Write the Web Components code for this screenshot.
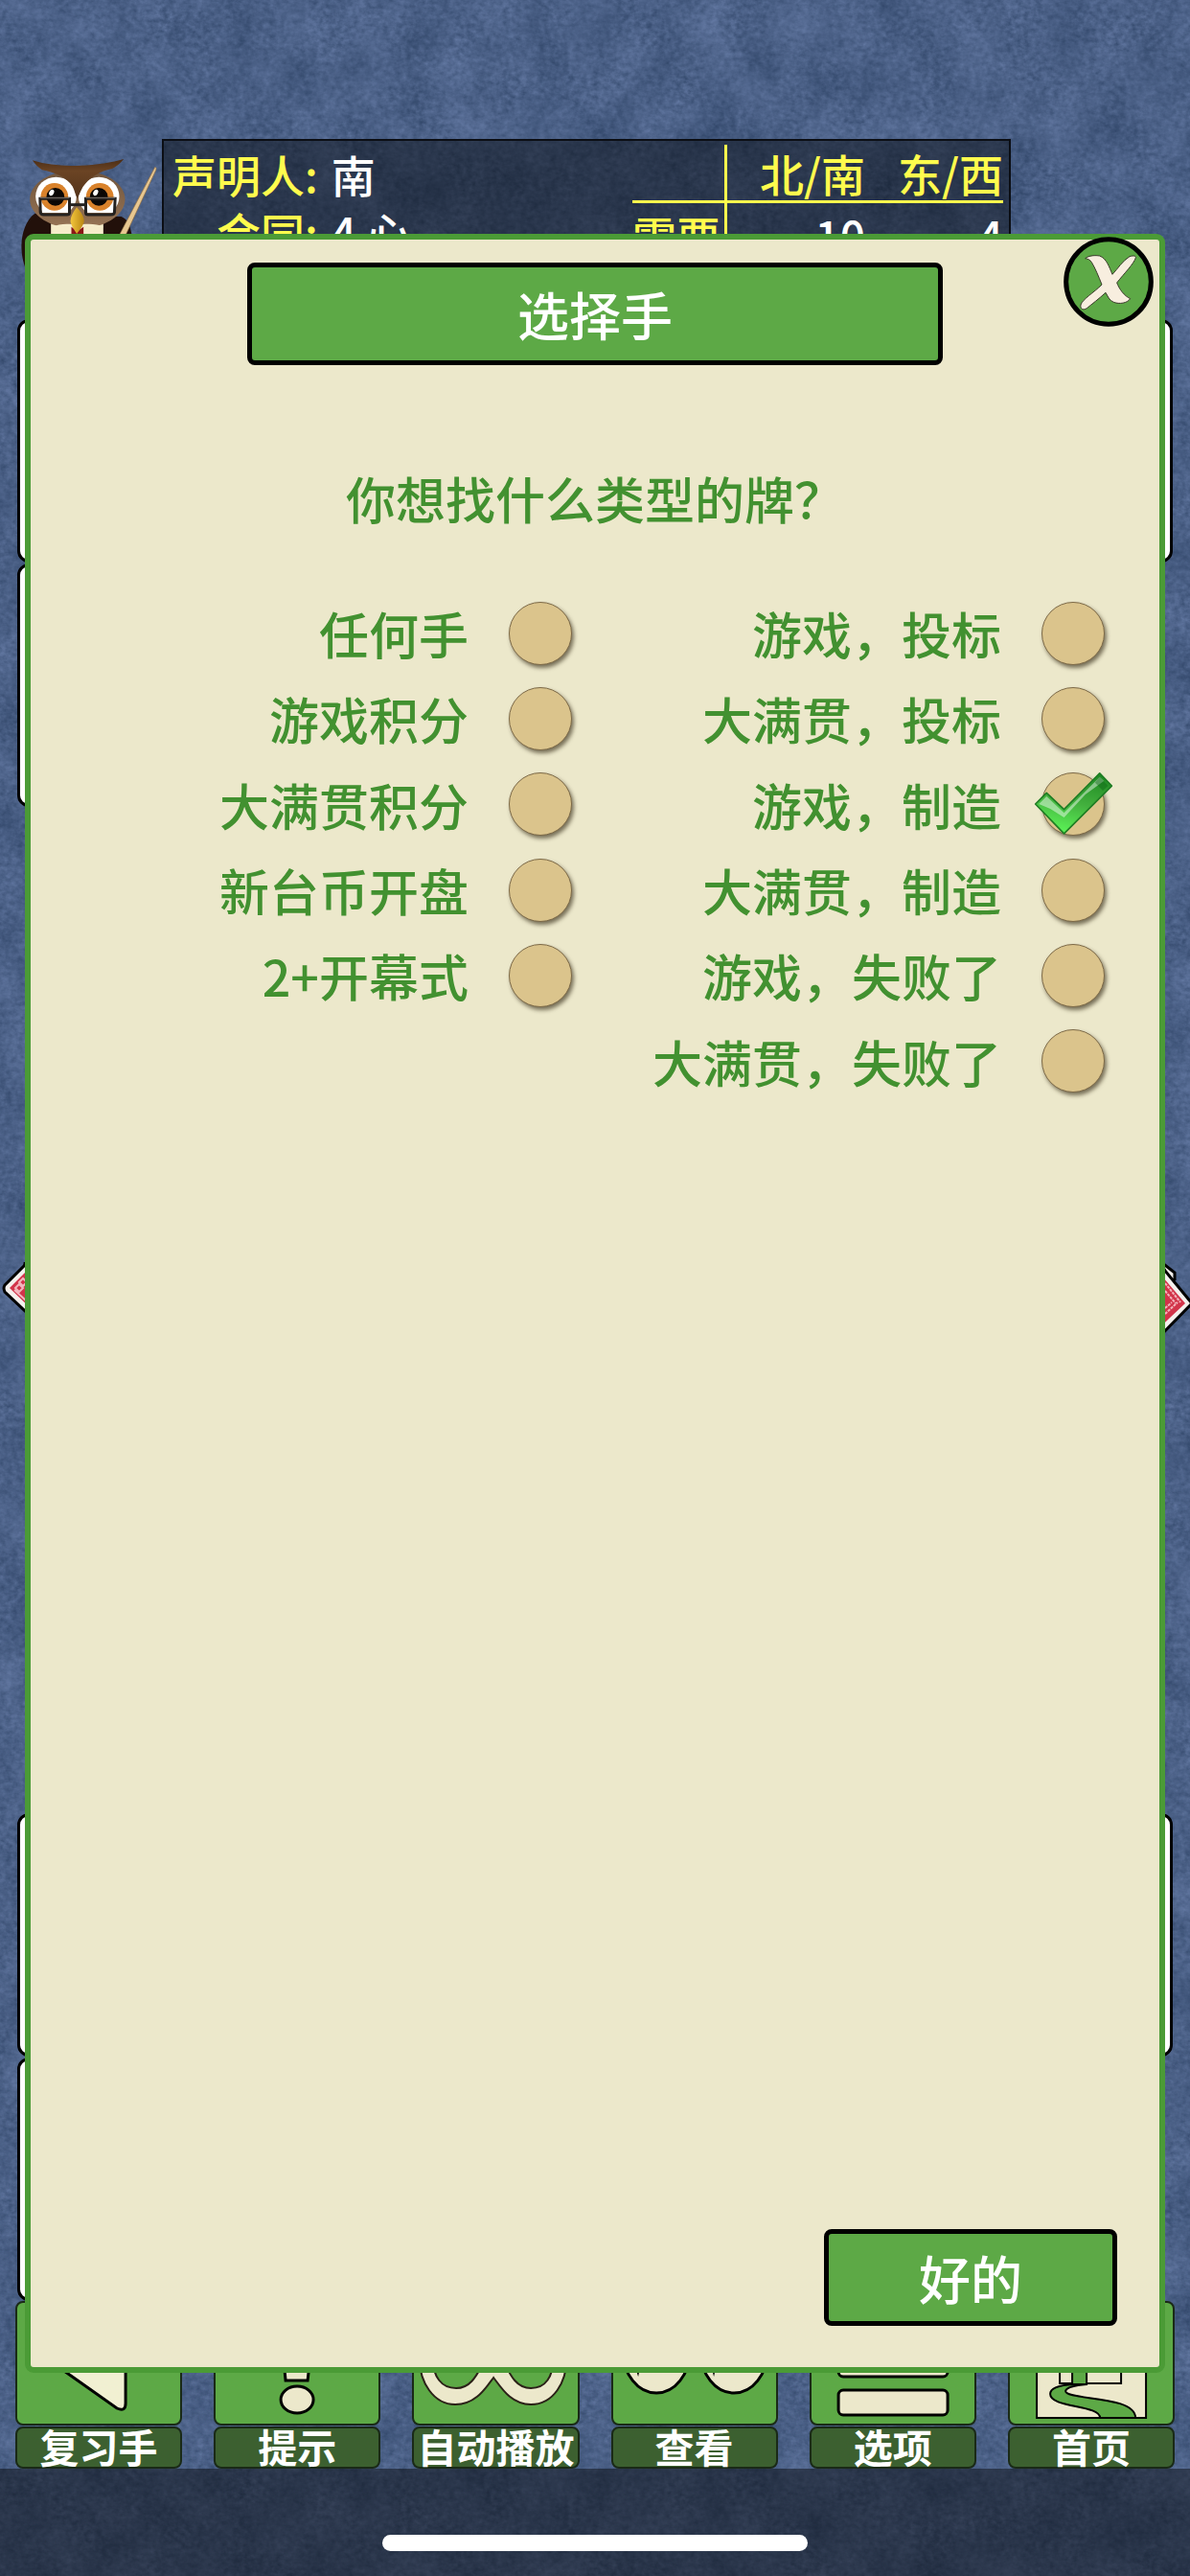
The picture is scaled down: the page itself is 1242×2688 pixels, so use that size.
<!DOCTYPE html>
<html lang="zh-CN">
<head>
<meta charset="utf-8">
<meta name="viewport" content="width=device-width, initial-scale=1">
<title>选择手</title>
<style>
    body {
        margin: 0;
        font-family: "Noto Sans CJK SC", "Noto Sans", sans-serif;
        font-weight: 500;
        background: #4b618a;
    }
</style>
</head>
<body>

<bridge-game>
    <score-panel slot="header"></score-panel>
    <card-table slot="table"></card-table>
    <tool-bar slot="tools">
        <tool-button icon="back">复习手</tool-button>
        <tool-button icon="hint">提示</tool-button>
        <tool-button icon="auto">自动播放</tool-button>
        <tool-button icon="view">查看</tool-button>
        <tool-button icon="options">选项</tool-button>
        <tool-button icon="home">首页</tool-button>
    </tool-bar>
    <game-dialog slot="dialog">
        <span slot="title">选择手</span>
        <hand-filter></hand-filter>
        <span slot="ok">好的</span>
    </game-dialog>
</bridge-game>

<script>
class BridgeGame extends HTMLElement {
    connectedCallback() {
        this.attachShadow({ mode: 'open' });
        this.shadowRoot.innerHTML = `
            <style>
                :host {
                    display: flex;
                    flex-direction: column;
                    position: relative;
                    min-height: 100vh;
                    overflow: hidden;
                }

                .felt {
                    position: absolute;
                    inset: 0;
                    width: 100%;
                    height: 100%;
                }

                .header {
                    position: relative;
                    padding-top: 145px;
                }

                .table {
                    position: relative;
                    flex: 1;
                    display: flex;
                    padding-top: 8px;
                }

                .tools {
                    position: relative;
                }

                .home-bar {
                    position: relative;
                    height: 112px;
                    display: flex;
                    align-items: flex-end;
                    justify-content: center;
                    box-sizing: border-box;
                    padding-bottom: 26px;
                    background: rgba(10, 12, 16, 0.5);
                }

                .home-bar span {
                    width: 444px;
                    height: 17px;
                    border-radius: 9px;
                    background: #fff;
                }
            </style>

            <svg class="felt" aria-hidden="true">
                <filter id="felt" x="0" y="0" width="100%" height="100%" color-interpolation-filters="sRGB">
                    <feTurbulence type="fractalNoise" baseFrequency="0.022 0.018" numOctaves="4" seed="7" result="mottle"/>
                    <feTurbulence type="fractalNoise" baseFrequency="0.16 0.2" numOctaves="3" seed="3" result="grain"/>
                    <feComposite in="mottle" in2="grain" operator="arithmetic" k2="0.5" k3="0.5"/>
                    <feColorMatrix values="0.28 0 0 0 0.152  0.28 0 0 0 0.236  0.32 0 0 0 0.366  0 0 0 0 1"/>
                </filter>
                <rect width="100%" height="100%" filter="url(#felt)"/>
            </svg>
            <div class="header"><slot name="header"></slot></div>
            <div class="table"><slot name="table"></slot></div>
            <div class="tools"><slot name="tools"></slot></div>
            <div class="home-bar"><span></span></div>
            <slot name="dialog"></slot>
        `;
    }
}

class ScorePanel extends HTMLElement {
    connectedCallback() {
        this.attachShadow({ mode: 'open' });
        this.shadowRoot.innerHTML = `
            <style>
                :host {
                    display: flex;
                    height: 180px;
                    font-size: 46px;
                    color: #fff;
                }

                svg {
                    width: 169px;
                    height: 180px;
                    flex: none;
                }

                .panel {
                    flex: 1;
                    display: flex;
                    justify-content: space-between;
                    align-items: flex-start;
                    box-sizing: border-box;
                    margin-right: 187px;
                    padding: 4px 6px 0 9px;
                    border: 2px solid #0b0e14;
                    background: rgba(10, 14, 20, 0.5);
                    overflow: hidden;
                }

                dl {
                    display: grid;
                    grid-template-columns: auto auto;
                    column-gap: 14px;
                    margin: 0;
                    line-height: 60px;
                }

                dt {
                    text-align: right;
                    color: #fffb4d;
                }

                dd {
                    margin: 0;
                }

                table {
                    border-collapse: collapse;
                    text-align: right;
                    line-height: 58px;
                }

                th {
                    font-weight: 500;
                    color: #fffb4d;
                }

                th, td {
                    padding: 0;
                    min-width: 144px;
                }

                thead th {
                    border-bottom: 3px solid #fffb4d;
                }

                tbody {
                    line-height: 66px;
                }

                tr > :first-child {
                    min-width: 0;
                    padding-right: 4px;
                    border-right: 3px solid #fffb4d;
                }
            </style>

            <svg viewBox="0 75 504 540" aria-hidden="true">
                <defs>
                    <linearGradient id="face" x2="0" y2="1">
                        <stop offset="0" stop-color="#6f543b"/>
                        <stop offset="1" stop-color="#977455"/>
                    </linearGradient>
                    <linearGradient id="brow" x2="0" y2="1">
                        <stop offset="0" stop-color="#4a2c14"/>
                        <stop offset="0.3" stop-color="#6b4424"/>
                        <stop offset="1" stop-color="#53331a"/>
                    </linearGradient>
                    <linearGradient id="beak" x2="1" y2="0">
                        <stop offset="0" stop-color="#f3c63c"/>
                        <stop offset="1" stop-color="#b98613"/>
                    </linearGradient>
                </defs>
                <path d="M108 308C76 330 64 380 66 420C68 470 90 520 130 540H350C400 510 420 440 410 370C405 340 395 325 378 318Z" fill="#22100a"/>
                <path d="M158 340H322V420H158Z" fill="#f6ecca"/>
                <ellipse cx="241" cy="264" rx="149" ry="92" fill="url(#face)"/>
                <path d="M160 352C185 338 220 340 240 345C262 340 300 338 322 350L312 360H172Z" fill="#f6ecca"/>
                <path d="M222 350L240 364L260 350V380H222Z" fill="#8a1616"/>
                <ellipse cx="174" cy="255" rx="64" ry="61" fill="#fff"/>
                <ellipse cx="308" cy="255" rx="64" ry="61" fill="#fff"/>
                <path d="M112 285C120 312 150 324 180 322L228 318L226 300H120ZM370 285C362 312 332 324 302 322L256 318L258 300H360Z" fill="#8d6c4e"/>
                <path d="M130 268H212V306H130ZM272 268H353V306H272Z" fill="#fff"/>
                <circle cx="169" cy="256" r="43" fill="#d9822b"/>
                <circle cx="311" cy="256" r="43" fill="#d9822b"/>
                <circle cx="172" cy="256" r="28" fill="#0a0705"/>
                <circle cx="308" cy="256" r="28" fill="#0a0705"/>
                <ellipse cx="160" cy="243" rx="7" ry="10" fill="#fff" transform="rotate(30 160 243)"/>
                <ellipse cx="298" cy="243" rx="7" ry="10" fill="#fff" transform="rotate(30 298 243)"/>
                <path d="M100 142C150 158 200 160 250 158C300 157 350 148 386 138C375 152 362 162 350 168C310 175 275 200 258 225C250 240 246 250 241 262C234 250 232 235 226 224C208 195 170 180 130 172C118 164 108 154 100 142Z" fill="url(#brow)"/>
                <g fill="none" stroke="#24211f" stroke-width="9">
                    <path d="M124 262H216V306Q216 312 208 312H136Q126 312 125 304Z"/>
                    <path d="M267 262H359L357 304Q356 312 346 312H274Q267 312 267 306Z"/>
                    <path d="M216 281H267"/>
                </g>
                <path d="M124 259H216M267 259H359" stroke="#77716c" stroke-width="3"/>
                <path d="M239 289C250 302 261 316 262 332C260 346 247 360 239 372C232 360 221 346 219 332C220 316 229 302 239 289Z" fill="url(#beak)"/>
                <path d="M484 163Q490 166 487 172L392 376H372Z" fill="#e8c790" stroke="#8f6d3f" stroke-width="2"/>
            </svg>
            <div class="panel">
                <dl>
                    <dt>声明人:</dt><dd>南</dd>
                    <dt>合同:</dt><dd>4 心</dd>
                </dl>
                <table>
                    <thead>
                        <tr><th></th><th scope="col">北/南</th><th scope="col">东/西</th></tr>
                    </thead>
                    <tbody>
                        <tr><th scope="row">需要</th><td>10</td><td>4</td></tr>
                    </tbody>
                </table>
            </div>
        `;
    }
}

class CardTable extends HTMLElement {
    connectedCallback() {
        this.attachShadow({ mode: 'open' });
        this.shadowRoot.innerHTML = `
            <style>
                :host {
                    flex: 1;
                    display: flex;
                    justify-content: space-between;
                }

                .side {
                    display: flex;
                    flex-direction: column;
                    justify-content: space-between;
                }

                .stack {
                    display: flex;
                    flex-direction: column;
                    gap: 1px;
                    height: 509px;
                    margin: 0 18px;
                }

                .card {
                    width: 160px;
                    height: 254px;
                    box-sizing: border-box;
                    border: 3px solid #000;
                    border-radius: 12px;
                    background: #fff;
                }

                svg {
                    width: 60px;
                    height: 100px;
                }

                .right svg {
                    align-self: flex-end;
                }
            </style>

            <div class="side">
                <div class="stack"><div class="card"></div><div class="card"></div></div>
                <svg viewBox="0 0 60 100" aria-hidden="true">
                    <path d="M24 8L25 -4H50V10Z" fill="#000"/>
                    <path d="M5 24L40 -11L75 24L40 64L5 31Q3 27 5 24Z" fill="#f4f1ee" stroke="#000" stroke-width="3"/>
                    <path d="M10 27L40 -3L70 24L40 56Z" fill="#d2344a"/>
                    <path d="M16 27l4 -4l4 4l-4 4zM20 21l4 -4l4 4l-4 4zM15 29L40 52" fill="none" stroke="#f3b5bd" stroke-width="2"/>
                </svg>
                <div class="stack"><div class="card"></div><div class="card"></div></div>
            </div>
            <div class="side right">
                <div class="stack"><div class="card"></div></div>
                <svg viewBox="0 0 60 100" aria-hidden="true">
                    <path d="M30 0L44 11V18L38 20Z" fill="#f4f1ee" stroke="#000" stroke-width="3"/>
                    <path d="M20 -8L62 43L20 86Z" fill="#f4f1ee" stroke="#000" stroke-width="3"/>
                    <path d="M20 2L55 43L20 76Z" fill="#d2344a"/>
                    <path d="M34 22L50 42M34 30L45 43M34 54L47 42M34 48L41 42" stroke="#f3b5bd" stroke-width="2" stroke-dasharray="3 1"/>
                </svg>
                <div class="stack"><div class="card"></div></div>
            </div>
        `;
    }
}

class ToolBar extends HTMLElement {
    connectedCallback() {
        this.attachShadow({ mode: 'open' });
        this.shadowRoot.innerHTML = `
            <style>
                :host {
                    display: grid;
                    grid-template-columns: repeat(6, minmax(0, 1fr));
                    gap: 33px;
                    padding: 0 16px;
                }
            </style>
            <slot></slot>
        `;
    }
}

const ICONS = {
    back: `
        <path d="M115 20V107Q115 116 106 112L24 54Q20 50 25 46L106 12Q115 9 115 20Z" fill="#f1f0d2"/>`,
    hint: `
        <path d="M68 12H106L98 83H75Z"/>
        <ellipse cx="87" cy="103" rx="17" ry="14"/>`,
    auto: `
        <g stroke="#2b2118" stroke-width="2">
            <path d="M45 108C22 108 8 84 8 62C8 38 24 18 45 18C66 18 76 34 85 46C94 34 104 18 124 18C146 18 161 38 161 62C161 84 148 108 124 108C104 108 94 92 85 80C76 92 66 108 45 108Z"/>
            <path d="M46 91C30 91 22 78 22 62C22 46 32 34 46 34C60 34 68 50 76 62C68 76 62 91 46 91Z" fill="#5da946"/>
            <path d="M124 91C140 91 147 78 147 62C147 46 138 34 124 34C110 34 102 50 95 62C102 76 108 91 124 91Z" fill="#5da946"/>
        </g>`,
    view: `
        <ellipse cx="47" cy="52" rx="35" ry="44"/>
        <ellipse cx="128" cy="52" rx="35" ry="44"/>
        <path d="M22 60L28 79L32 60ZM102 60L107 79L111 60Z" fill="#000" stroke="none"/>`,
    options: `
        <rect x="30" y="13" width="114" height="26" rx="5"/>
        <rect x="30" y="53" width="114" height="26" rx="5"/>
        <rect x="30" y="93" width="114" height="26" rx="5"/>`,
    home: `
        <g stroke-width="2">
            <path d="M30 12H144V122H30Z"/>
            <path d="M54 86V45L86 20L118 45V86Z"/>
            <path d="M68 87C52 88 44 91 44 97C44 112 96 108 96 122H133C133 98 60 104 60 94C61 90 70 88 82 87Z" fill="#5da946"/>
            <path d="M67 50H82V87H67Z" fill="#5da946"/>
        </g>`
};

class ToolButton extends HTMLElement {
    connectedCallback() {
        this.attachShadow({ mode: 'open' });
        this.shadowRoot.innerHTML = `
            <style>
                :host {
                    display: block;
                }

                button {
                    display: flex;
                    flex-direction: column;
                    gap: 1px;
                    width: 100%;
                    padding: 0;
                    border: 0;
                    background: none;
                    color: #fff;
                    font: inherit;
                    font-size: 41px;
                    font-weight: 700;
                    cursor: pointer;
                }

                .tile, .label {
                    width: 100%;
                    box-sizing: border-box;
                    border: 2px solid #1a2a17;
                    border-radius: 8px;
                }

                .tile {
                    height: 130px;
                    background: #5da946;
                }

                .label {
                    height: 44px;
                    line-height: 36px;
                    white-space: nowrap;
                    background: #3c6030;
                }

                svg {
                    display: block;
                    width: 100%;
                    height: 100%;
                    fill: #ece8cb;
                    stroke: #000;
                    stroke-width: 3;
                }
            </style>

            <button type="button">
                <span class="tile"><svg viewBox="2 2 170 126" aria-hidden="true">${ICONS[this.getAttribute('icon')]}</svg></span>
                <span class="label"><slot></slot></span>
            </button>
        `;
    }
}

class GameDialog extends HTMLElement {
    connectedCallback() {
        this.attachShadow({ mode: 'open' });
        this.shadowRoot.innerHTML = `
            <style>
                :host {
                    position: absolute;
                    inset: 244px 26px 212px;
                    display: flex;
                    flex-direction: column;
                    box-sizing: border-box;
                    border: 6px solid #4b9b36;
                    border-radius: 9px;
                    background: #ece8cb;
                    color: #429130;
                }

                h1, .ok {
                    box-sizing: border-box;
                    border: 5px solid #000;
                    border-radius: 8px;
                    background: #5da946;
                    color: #fff;
                    font: inherit;
                    font-size: 54px;
                    text-align: center;
                }

                h1 {
                    width: 100%;
                    max-width: 726px;
                    margin: 24px auto 0;
                    line-height: 97px;
                }

                .ok {
                    align-self: flex-end;
                    width: 306px;
                    margin: auto 44px 43px 0;
                    padding: 0;
                    line-height: 91px;
                    cursor: pointer;
                }

                .close {
                    position: absolute;
                    top: -3px;
                    right: 6px;
                    width: 94px;
                    height: 94px;
                    padding: 0;
                    border: 0;
                    border-radius: 50%;
                    background: none;
                    cursor: pointer;
                }

                .close svg {
                    display: block;
                    width: 100%;
                    height: 100%;
                }
            </style>

            <h1><slot name="title"></slot></h1>
            <slot></slot>
            <button class="ok" type="button"><slot name="ok"></slot></button>
            <button class="close" type="button">
                <svg viewBox="865 350 282 282" aria-hidden="true">
                    <circle cx="1006" cy="491" r="133" fill="#5da946" stroke="#000" stroke-width="15"/>
                    <path d="M933 418C945 408 965 408 978 410C1000 418 1008 445 1018 468C1035 450 1050 425 1072 412C1085 408 1092 410 1091 416C1085 435 1055 465 1032 494C1040 515 1055 535 1074 544C1065 558 1040 562 1022 555C1008 550 1003 535 997 525C975 545 955 560 938 574C925 582 917 575 919 563C925 545 960 525 985 500C975 475 965 450 953 430C950 424 940 418 933 418Z" fill="#f8eedf" stroke="#3c3a2c" stroke-width="3"/>
                </svg>
            </button>
        `;
    }
}

const FILTERS = [
    ['任何手', '游戏积分', '大满贯积分', '新台币开盘', '2+开幕式'],
    ['游戏，投标', '大满贯，投标', '游戏，制造', '大满贯，制造', '游戏，失败了', '大满贯，失败了']
];
const SELECTED = '游戏，制造';

class HandFilter extends HTMLElement {
    connectedCallback() {
        this.attachShadow({ mode: 'open' });
        const option = (name) => `
            <label>
                ${name}
                <span class="radio">
                    <input type="radio" name="hand" value="${name}" ${name === SELECTED ? 'checked' : ''}>
                    <svg viewBox="232 612 262 210" aria-hidden="true">
                        <path d="M243 720L278 685L333 737L445 623L483 663L333 813Z" fill="url(#tick)" stroke="#1f7d24" stroke-width="5" stroke-linejoin="round"/>
                        <path d="M254 720L278 696L333 748L445 635L458 648L400 690L333 762L290 735Z" fill="#fff" opacity="0.45"/>
                        <path d="M445 635L471 663L455 678L430 652Z" fill="#0c5e14" opacity="0.4"/>
                    </svg>
                </span>
            </label>`;
        this.shadowRoot.innerHTML = `
            <style>
                :host {
                    display: block;
                    font-size: 52px;
                }

                fieldset {
                    min-width: 0;
                    margin: 0;
                    padding: 0;
                    border: 0;
                }

                legend {
                    width: 100%;
                    padding: 109px 0 66px;
                    line-height: 60px;
                    text-align: center;
                }

                .columns {
                    display: grid;
                    grid-template-columns: 1fr 1fr;
                    padding: 0 57px 0 9px;
                }

                .column {
                    display: grid;
                    grid-template-rows: repeat(6, 1fr);
                    height: 536px;
                }

                label {
                    display: flex;
                    align-items: center;
                    justify-content: flex-end;
                    gap: 42px;
                    white-space: nowrap;
                }

                .radio {
                    position: relative;
                    display: flex;
                }

                input {
                    appearance: none;
                    width: 66px;
                    height: 66px;
                    margin: 0;
                    border: 1px solid #7d6a48;
                    border-radius: 50%;
                    background: #dbc48c;
                    box-shadow: 2px 3px 4px rgba(40, 30, 10, 0.6);
                }

                .radio svg {
                    display: none;
                    position: absolute;
                    top: -3px;
                    left: -10px;
                    width: 87px;
                    height: 70px;
                    pointer-events: none;
                }

                input:checked + svg {
                    display: block;
                }

                .defs {
                    position: absolute;
                    width: 0;
                    height: 0;
                }
            </style>

            <svg class="defs" aria-hidden="true">
                <linearGradient id="tick" x1="0.7" y1="0" x2="0.4" y2="1">
                    <stop offset="0" stop-color="#1f8a22"/>
                    <stop offset="0.5" stop-color="#43b03e"/>
                    <stop offset="1" stop-color="#5cf457"/>
                </linearGradient>
            </svg>
            <fieldset>
                <legend>你想找什么类型的牌？</legend>
                <div class="columns">
                    ${FILTERS.map(list => `<div class="column">${list.map(option).join('')}</div>`).join('')}
                </div>
            </fieldset>
        `;
    }
}

customElements.define('bridge-game', BridgeGame);
customElements.define('score-panel', ScorePanel);
customElements.define('card-table', CardTable);
customElements.define('tool-bar', ToolBar);
customElements.define('tool-button', ToolButton);
customElements.define('game-dialog', GameDialog);
customElements.define('hand-filter', HandFilter);
</script>
</body>
</html>
